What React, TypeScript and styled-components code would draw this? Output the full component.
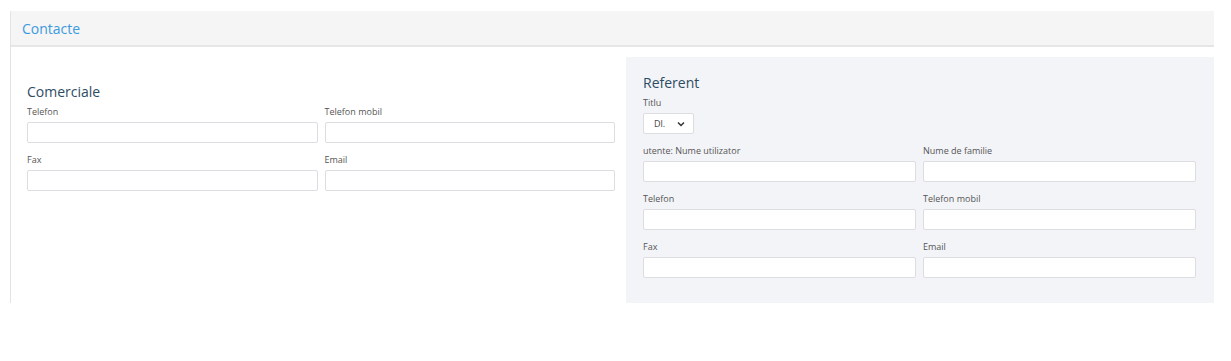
import styled, { createGlobalStyle } from "styled-components";

const GlobalStyle = createGlobalStyle`
  html, body {
    margin: 0;
    padding: 0;
    background: #ffffff;
    font-family: "Open Sans", "Liberation Sans", sans-serif;
  }
`;

const Page = styled.div`
  padding: 11px 17px 0 10px;
`;

const Panel = styled.div`
  border-left: 1px solid #e3e3e3;
`;

const PanelHeader = styled.div`
  height: 34px;
  display: flex;
  align-items: center;
  padding-left: 11px;
  background: #f5f5f5;
  border-bottom: 2px solid #e6e6e6;
`;

const PanelTitle = styled.h3`
  margin: 0;
  font-size: 14px;
  font-weight: 400;
  color: #3b9ae0;
`;

const Body = styled.div`
  display: grid;
  grid-template-columns: 588px 588px;
  column-gap: 11px;
  padding: 10px 0 0 16px;
`;

const Section = styled.section<{ $shaded?: boolean }>`
  padding: ${(p) => (p.$shaded ? "16px 18px 14px 17px" : "25px 0 0 0")};
  background: ${(p) => (p.$shaded ? "#f3f4f8" : "transparent")};
`;

const SectionTitle = styled.h4`
  margin: 0 0 4px;
  font-size: 14px;
  line-height: 20px;
  font-weight: 400;
  color: #2d4c63;
`;

const Row = styled.div`
  display: grid;
  grid-template-columns: 1fr 1fr;
  column-gap: 7px;
  margin-bottom: 11px;
`;

const Field = styled.div`
  display: flex;
  flex-direction: column;
`;

const Label = styled.label`
  font-size: 9px;
  line-height: 12px;
  color: #555;
  margin-bottom: 4px;
`;

const Input = styled.input`
  box-sizing: border-box;
  height: 21px;
  width: 100%;
  margin: 0;
  border: 1px solid #dcdde0;
  border-radius: 2px;
  background: #fff;
  font: inherit;
`;

const Select = styled.div`
  box-sizing: border-box;
  width: 51px;
  height: 21px;
  display: flex;
  align-items: center;
  justify-content: space-between;
  padding: 0 8px 0 10px;
  border: 1px solid #dcdde0;
  border-radius: 2px;
  background: #fff;
  font-size: 9px;
  color: #444;
`;

const FieldText = ({ label }: { label: string }) => (
  <Field>
    <Label>{label}</Label>
    <Input type="text" />
  </Field>
);

const App = () => {
  return (
    <Page>
      <GlobalStyle />
      <Panel>
        <PanelHeader>
          <PanelTitle>Contacte</PanelTitle>
        </PanelHeader>
        <Body>
          <Section>
            <SectionTitle>Comerciale</SectionTitle>
            <Row>
              <FieldText label="Telefon" />
              <FieldText label="Telefon mobil" />
            </Row>
            <Row>
              <FieldText label="Fax" />
              <FieldText label="Email" />
            </Row>
          </Section>
          <Section $shaded>
            <SectionTitle>Referent</SectionTitle>
            <Row>
              <Field>
                <Label>Titlu</Label>
                <Select>
                  <span>Dl.</span>
                  <svg width="8" height="6" viewBox="0 0 8 6">
                    <path d="M1 1.5 L4 4.5 L7 1.5" fill="none" stroke="#333" strokeWidth="1.5" />
                  </svg>
                </Select>
              </Field>
            </Row>
            <Row>
              <FieldText label="utente: Nume utilizator" />
              <FieldText label="Nume de familie" />
            </Row>
            <Row>
              <FieldText label="Telefon" />
              <FieldText label="Telefon mobil" />
            </Row>
            <Row>
              <FieldText label="Fax" />
              <FieldText label="Email" />
            </Row>
          </Section>
        </Body>
      </Panel>
    </Page>
  );
};

export default App;
